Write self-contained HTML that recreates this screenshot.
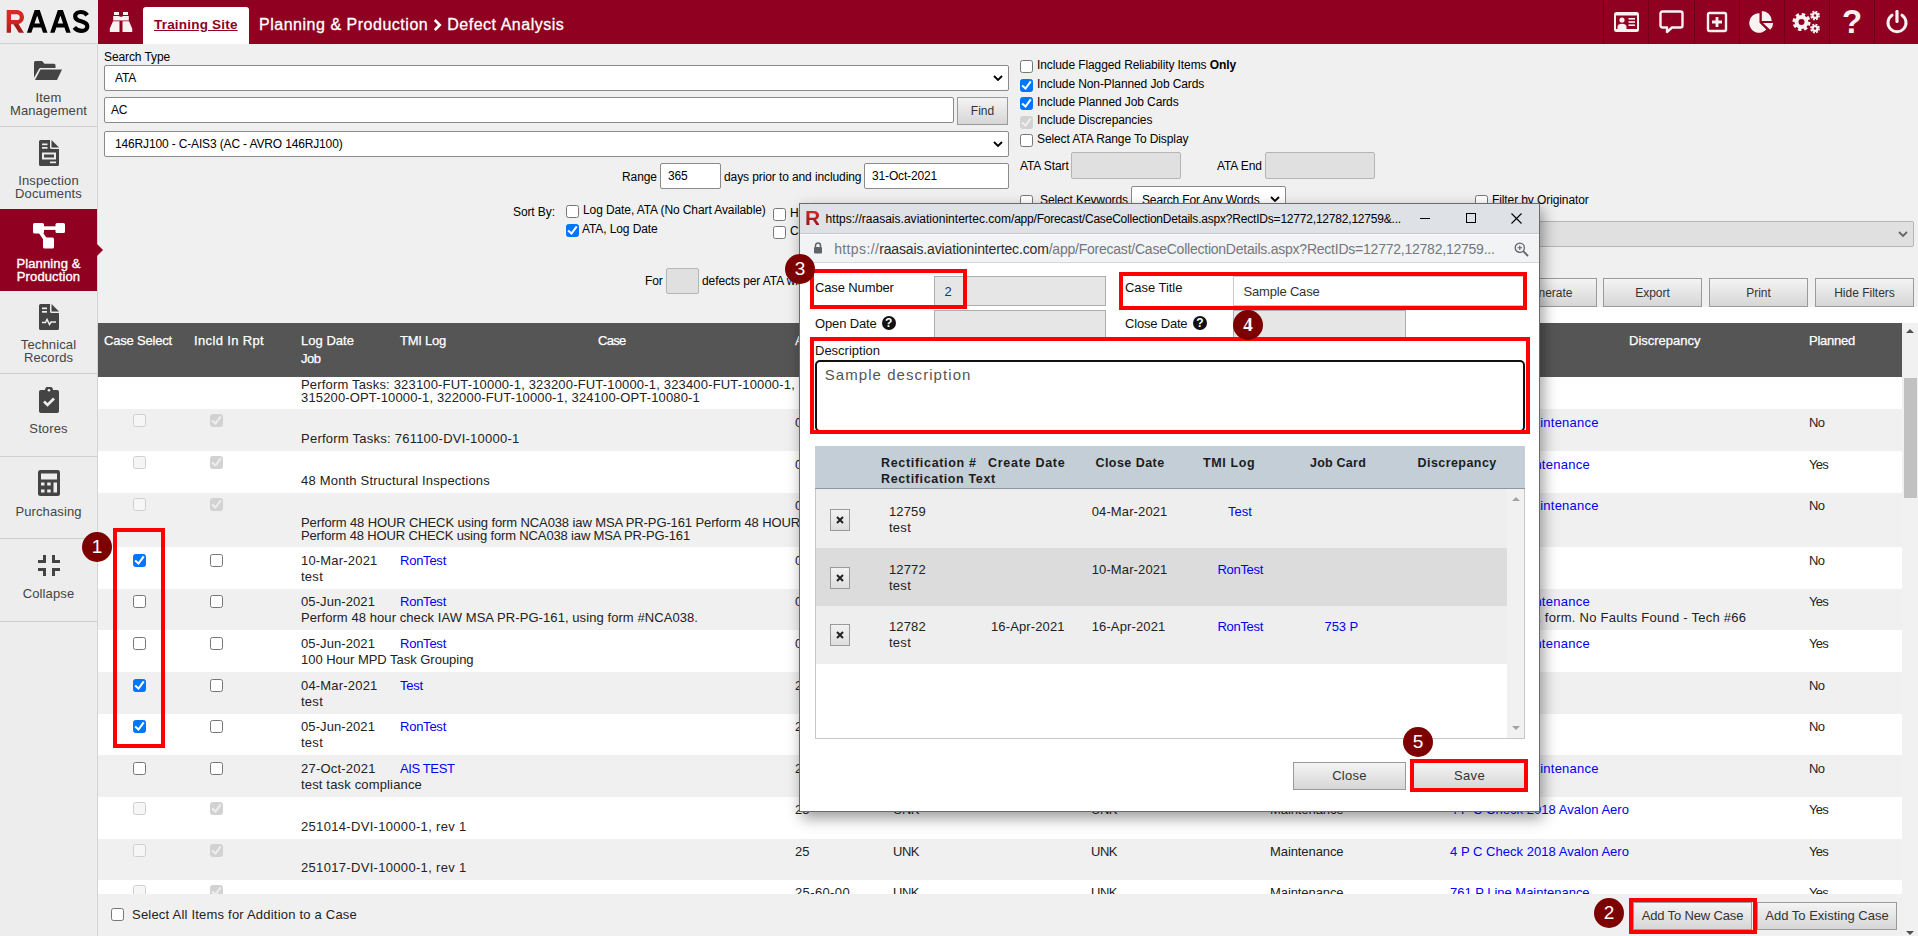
<!DOCTYPE html>
<html><head><meta charset="utf-8">
<style>
*{box-sizing:border-box;margin:0;padding:0}
html,body{width:1918px;height:936px;overflow:hidden;background:#f0f0f0;font-family:"Liberation Sans",sans-serif;font-size:12px;color:#000}
.abs{position:absolute}
#top{position:absolute;left:0;top:0;width:1918px;height:44px;background:#8f0021}
#logo{position:absolute;left:0;top:0;width:98px;height:44px;background:#ededed}
#side{position:absolute;left:0;top:44px;width:98px;height:892px;background:#ededed;border-right:1px solid #d4d4d4}
.si{position:absolute;left:0;width:97px;height:83px;border-top:1px solid #d0d0d0;text-align:center;color:#444;font-size:13px;line-height:13px;letter-spacing:.12px}
.si.act{background:#8f0021;color:#fff;border-top-color:#8f0021}
.si svg{position:absolute;left:0;right:0;margin:auto}
.si .t{position:absolute;left:0;width:97px}
.a12{letter-spacing:-.1px;font-size:12px;line-height:14px;white-space:nowrap;position:absolute}
.v{font-size:13px;letter-spacing:.3px;white-space:nowrap;position:absolute;line-height:15px;color:#222}
.inp{letter-spacing:-.15px;position:absolute;background:#fff;border:1px solid #8a8a8a;border-radius:2px;font-size:12px;line-height:14px;white-space:nowrap}
.inp.dis{background:#e0e0e0;border-color:#b5b5b5}
.cb{position:absolute;width:13px;height:13px;border:1px solid #767676;border-radius:2.5px;background:#fff}
.cb.on{background:#0075ff;border-color:#0075ff}
.cb.on:after,.cb.don:after{content:"";position:absolute;left:-1px;top:-1px;width:13px;height:13px;background:#fff;clip-path:polygon(1.4px 7.3px,2.8px 5.8px,5.4px 8.1px,9.9px 1.8px,11.6px 3px,5.7px 11px)}
.cb.don:after{background:#eee}
.cb.d{border-color:#cfcfcf;background:#f6f6f6}
.cb.don{border-color:#d2d2d2;background:#d2d2d2}
.btn{position:absolute;border:1px solid #9a9a9a;background:linear-gradient(#f4f4f4,#d6d6d6);font-size:12px;color:#333;text-align:center;white-space:nowrap}
.row{position:absolute;left:98px;width:1804px}
.row.g{background:#f0f0f0}.row.w{background:#fff}
a,.lk{color:#0000f5}
.badge{position:absolute;width:30px;height:30px;border-radius:15px;background:#7d0000;color:#fff;font-size:19px;line-height:30px;text-align:center}
.red{position:absolute;border:4px solid #f00}
.th{color:#fff;-webkit-text-stroke:.25px #fff}
.vb{font-size:13px;letter-spacing:.3px}
.dk{color:#111}
.gh{font-weight:bold;font-size:12.5px;color:#1c1c1c}
</style></head><body>
<div id="top">
 <!-- binoculars -->
 <svg class="abs" style="left:109px;top:11px" width="24" height="22" viewBox="0 0 24 22"><g fill="#f8f2f3"><path d="M5 1h5v3H5zM14 1h5v3h-5zM4.2 5h6.3v4.5H4.2zM13.5 5h6.3v4.5h-6.3zM10.5 5.8h3v3.7h-3z"/><path d="M4 10.3h6.5V21H.8v-3.4zM13.5 10.3H20l3.2 7.3V21h-9.7z"/></g></svg>
 <div class="abs" style="left:143px;top:7px;width:106px;height:37px;background:#fff;border-radius:3px 3px 0 0"></div>
 <div class="abs" style="left:154px;top:17px;font-size:13.5px;font-weight:bold;color:#8f0021;text-decoration:underline;white-space:nowrap;letter-spacing:.2px">Training Site</div>
 <div class="abs" style="left:259px;top:15.500px;font-size:16px;color:#fff;white-space:nowrap;letter-spacing:.52px;-webkit-text-stroke:.3px #fff">Planning &amp; Production <svg width="9" height="12" viewBox="0 0 9 12" style="margin:0 0 -1px 0"><path d="M1.800 1l5 5-5 5" fill="none" stroke="#fff" stroke-width="2.600"/></svg> Defect Analysis</div>
 <!-- separators -->
 <div class="abs" style="left:1603px;top:0;width:1px;height:44px;background:#6f0019"></div>
 <div class="abs" style="left:1648px;top:0;width:1px;height:44px;background:#6f0019"></div>
 <div class="abs" style="left:1694px;top:0;width:1px;height:44px;background:#6f0019"></div>
 <div class="abs" style="left:1739px;top:0;width:1px;height:44px;background:#6f0019"></div>
 <div class="abs" style="left:1784px;top:0;width:1px;height:44px;background:#6f0019"></div>
 <div class="abs" style="left:1829px;top:0;width:1px;height:44px;background:#6f0019"></div>
 <div class="abs" style="left:1874px;top:0;width:1px;height:44px;background:#6f0019"></div>
 <!-- id card -->
 <svg class="abs" style="left:1613px;top:11px" width="27" height="22" viewBox="0 0 27 22"><rect x="1" y="1" width="25" height="20" rx="2.5" fill="#f8f2f3"/><rect x="3" y="4.5" width="21" height="13.5" fill="#8f0021"/><circle cx="9" cy="9" r="2.6" fill="#f8f2f3"/><path d="M4.5 18v-2.2c0-2 1.8-3 4.5-3s4.500 1 4.500 3V18z" fill="#f8f2f3"/><rect x="15.500" y="7" width="6.500" height="1.600" fill="#f8f2f3"/><rect x="15.500" y="10.200" width="6.500" height="1.600" fill="#f8f2f3"/><rect x="15.500" y="13.400" width="6.500" height="1.600" fill="#f8f2f3"/></svg>
 <!-- comment -->
 <svg class="abs" style="left:1659px;top:10px" width="25" height="24" viewBox="0 0 25 24"><path d="M3.500 1.500h18a2 2 0 0 1 2 2v12a2 2 0 0 1-2 2h-8.500l-5 4.500v-4.500h-4.500a2 2 0 0 1-2-2v-12a2 2 0 0 1 2-2z" fill="none" stroke="#f8f2f3" stroke-width="2.400" stroke-linejoin="round"/></svg>
 <!-- plus square -->
 <svg class="abs" style="left:1706px;top:11px" width="22" height="22" viewBox="0 0 22 22"><rect x="2" y="2" width="18" height="18" rx="1.500" fill="none" stroke="#f8f2f3" stroke-width="2.400"/><path d="M11 6v10M6 11h10" stroke="#f8f2f3" stroke-width="2.800"/></svg>
 <!-- pie -->
 <svg class="abs" style="left:1749px;top:10px" width="26" height="24" viewBox="0 0 26 24"><path d="M10.500 3.200v9.600l6.800 6.800A9.800 9.800 0 1 1 10.500 3.200z" fill="#f8f2f3"/><path d="M12.800 1v10h10A10 10 0 0 0 12.800 1z" fill="#f8f2f3"/><path d="M14 13h10.200a10 10 0 0 1-3 6.700z" fill="#f8f2f3"/></svg>
 <!-- cogs -->
 <svg class="abs" style="left:1792px;top:10px" width="30" height="24" viewBox="0 0 30 24"><g fill="none" stroke="#f8f2f3"><circle cx="9.500" cy="12" r="5" stroke-width="4"/><circle cx="9.500" cy="12" r="7.600" stroke-width="3" stroke-dasharray="3.400 2.570"/><circle cx="23" cy="5.500" r="2.400" stroke-width="2.200"/><circle cx="23" cy="5.500" r="4" stroke-width="1.800" stroke-dasharray="1.900 1.240"/><circle cx="23" cy="18.500" r="2.400" stroke-width="2.200"/><circle cx="23" cy="18.500" r="4" stroke-width="1.800" stroke-dasharray="1.900 1.240"/></g></svg>
 <!-- question -->
 <div class="abs" style="left:1842px;top:4px;width:20px;font-size:33px;font-weight:bold;color:#f8f2f3;line-height:36px;text-align:center">?</div>
 <!-- power -->
 <svg class="abs" style="left:1885px;top:10px" width="24" height="24" viewBox="0 0 24 24"><path d="M7 5.200A9 9 0 1 0 17 5.200" fill="none" stroke="#f8f2f3" stroke-width="3" stroke-linecap="round"/><path d="M12 1.500v10" stroke="#f8f2f3" stroke-width="3.200" stroke-linecap="round"/></svg>
</div>
<div id="logo"><svg class="abs" style="left:0;top:0" width="97" height="44" viewBox="0 0 97 44">
<defs><linearGradient id="rg" x1="0" y1="10" x2="0" y2="33" gradientUnits="userSpaceOnUse"><stop offset="0" stop-color="#dd2a25"/><stop offset=".6" stop-color="#cc2420"/><stop offset="1" stop-color="#aa1d19"/></linearGradient><clipPath id="lc"><rect x="0" y="10" width="97" height="22.700"/></clipPath></defs>
<g fill="none" stroke-width="4.300" clip-path="url(#lc)">
<path d="M14 21L22.700 34.700" stroke="#a31b18"/>
<path d="M8.850 35V12.100h8a5.050 5.050 0 0 1 0 10.100H8.850" stroke="url(#rg)"/>
<path d="M28.500 34.700L37.200 9l8.700 25.700M32 25.500h10.400" stroke="#000" stroke-width="4.200"/>
<path d="M51.700 34.700L60.400 9l8.700 25.700M55.200 25.500h10.400" stroke="#000" stroke-width="4.200"/>
</g>
<path d="M87.200 15.200C85.600 13 83.400 12 80.800 12c-3.300 0-5.600 1.800-5.600 4.400 0 3.200 2.900 4 6 4.800 3.300.9 6.100 1.900 6.100 5.200 0 2.800-2.300 4.500-5.700 4.500-3 0-5.500-1.200-7.300-3.500" stroke="#000" fill="none" stroke-width="4.200"/>
</svg></div>
<div id="side">
 <div class="si" style="top:-1px;height:83px;border-top:1px solid #d0d0d0">
  <svg style="top:16px;left:32.500px;right:auto;margin:0" width="30" height="21" viewBox="0 0 30 20" preserveAspectRatio="none"><path d="M1 2.500A1.500 1.500 0 0 1 2.500 1h6.500l2.500 2.500h9.500a1.500 1.500 0 0 1 1.500 1.500v2.500H8a2.500 2.500 0 0 0-2.300 1.500L1 17z" fill="#444"/><path d="M7.500 9h21.500l-5 10H2z" fill="#444"/></svg>
  <div class="t" style="top:47px">Item</div><div class="t" style="top:60px">Management</div>
 </div>
 <div class="si" style="top:82px;height:83px">
  <svg style="top:13px" width="20" height="26" viewBox="0 0 20 26"><path d="M0 1.500A1.500 1.500 0 0 1 1.500 0H11v7.500a1.500 1.500 0 0 0 1.500 1.500H20v15.500a1.500 1.500 0 0 1-1.500 1.500h-17A1.500 1.500 0 0 1 0 24.500z" fill="#444"/><path d="M12.500 0l7.500 7.500h-7.500z" fill="#444"/><g fill="#ededed"><rect x="3" y="3.500" width="5.500" height="1.700"/><rect x="3" y="7" width="5.500" height="1.700"/><rect x="3" y="12.500" width="14" height="7"/><rect x="11" y="21.500" width="6" height="1.700"/></g><rect x="5" y="14.500" width="10" height="3" fill="#444"/></svg>
  <div class="t" style="top:47px">Inspection</div><div class="t" style="top:60px">Documents</div>
 </div>
 <div class="si act" style="top:165px;height:82px">
  <svg style="top:13px" width="32" height="26" viewBox="0 0 32 26"><g fill="#fff"><rect x="0" y="0" width="11" height="10.500" rx="1.500"/><rect x="22.500" y="0" width="9.500" height="10" rx="1.500"/><rect x="10" y="14.500" width="11" height="11" rx="1.500"/><rect x="10" y="3.300" width="13" height="3.600"/><path d="M5.500 9.500l3.200-1.800 6 9-3.200 1.800z"/></g></svg>
  <div class="t" style="top:47px;-webkit-text-stroke:.35px #fff">Planning &amp;</div><div class="t" style="top:60px;-webkit-text-stroke:.35px #fff">Production</div>
  <div class="abs" style="left:97px;top:34px;width:0;height:0;border-left:6px solid #8f0021;border-top:6px solid transparent;border-bottom:6px solid transparent"></div>
 </div>
 <div class="si" style="top:247px;border-top:none;height:82px">
  <svg style="top:13px" width="20" height="26" viewBox="0 0 20 26"><path d="M0 1.500A1.500 1.500 0 0 1 1.500 0H11v7.500a1.500 1.500 0 0 0 1.500 1.500H20v15.500a1.500 1.500 0 0 1-1.500 1.500h-17A1.500 1.500 0 0 1 0 24.500z" fill="#444"/><path d="M12.500 0l7.500 7.500h-7.500z" fill="#444"/><g fill="#ededed"><rect x="3" y="3.500" width="5" height="1.700"/><rect x="3" y="7" width="5" height="1.700"/></g><path d="M3 18.500h3.500l1.500-3 2.500 5 1.500-2.500h5" fill="none" stroke="#ededed" stroke-width="1.500"/></svg>
  <div class="t" style="top:47px">Technical</div><div class="t" style="top:60px">Records</div>
 </div>
 <div class="si" style="top:329px">
  <svg style="top:13px" width="20" height="26" viewBox="0 0 20 26"><path d="M1.800 3H6a4 3.500 0 0 1 8 0h4.200A1.800 1.800 0 0 1 20 4.800v19.400a1.800 1.800 0 0 1-1.800 1.800H1.800A1.800 1.800 0 0 1 0 24.200V4.800A1.800 1.800 0 0 1 1.800 3z" fill="#444"/><circle cx="10" cy="3.200" r="1.300" fill="#ededed"/><path d="M5 14.500l3.500 3.500 6.500-6.500" fill="none" stroke="#ededed" stroke-width="2.600"/></svg>
  <div class="t" style="top:48px">Stores</div>
 </div>
 <div class="si" style="top:412px;height:82px">
  <svg style="top:13px" width="22" height="26" viewBox="0 0 22 26"><rect x="0" y="0" width="22" height="26" rx="2.500" fill="#444"/><g fill="#ededed"><rect x="3" y="3.500" width="16" height="6"/><rect x="3" y="12.500" width="3.500" height="3"/><rect x="9.200" y="12.500" width="3.500" height="3"/><rect x="15.500" y="12.500" width="3.500" height="10"/><rect x="3" y="19.500" width="3.500" height="3"/><rect x="9.200" y="19.500" width="3.500" height="3"/></g></svg>
  <div class="t" style="top:48px">Purchasing</div>
 </div>
 <div class="si" style="top:494px">
  <svg style="top:16px" width="22" height="21" viewBox="0 0 22 21"><g fill="none" stroke="#444" stroke-width="3"><path d="M0 6.500h6.500V0M22 6.500h-6.500V0M0 14.500h6.500V21M22 14.500h-6.500V21"/></g></svg>
  <div class="t" style="top:48px">Collapse</div>
 </div>
 <div class="si" style="top:577px;height:1px"></div>
</div>
<div id="main">
 <div class="a12" style="left:104px;top:50px">Search Type</div>
 <div class="inp" style="left:104px;top:65px;width:905px;height:26px;padding:5px 0 0 10px">ATA<svg class="abs" style="right:5px;top:9px" width="10" height="7" viewBox="0 0 10 7"><path d="M1 1l4 4 4-4" fill="none" stroke="#000" stroke-width="1.800"/></svg></div>
 <div class="inp" style="left:104px;top:97px;width:850px;height:26px;padding:5px 0 0 6px">AC</div>
 <div class="btn" style="left:957px;top:97px;width:51px;height:28px;line-height:26px">Find</div>
 <div class="inp" style="left:104px;top:131px;width:905px;height:26px;padding:5px 0 0 10px">146RJ100 - C-AIS3 (AC - AVRO 146RJ100)<svg class="abs" style="right:5px;top:9px" width="10" height="7" viewBox="0 0 10 7"><path d="M1 1l4 4 4-4" fill="none" stroke="#000" stroke-width="1.800"/></svg></div>
 <div class="a12" style="left:622px;top:170px">Range</div>
 <div class="inp" style="left:660px;top:163px;width:61px;height:26px;padding:5px 0 0 7px">365</div>
 <div class="a12" style="left:724px;top:170px">days prior to and including</div>
 <div class="inp" style="left:864px;top:163px;width:145px;height:26px;padding:5px 0 0 7px">31-Oct-2021</div>
 <div class="a12" style="left:513px;top:205px">Sort By:</div>
 <div class="cb" style="left:566px;top:205px"></div>
 <div class="a12" style="left:583px;top:203px">Log Date, ATA (No Chart Available)</div>
 <div class="cb on" style="left:566px;top:224px"></div>
 <div class="a12" style="left:582px;top:222px">ATA, Log Date</div>
 <div class="cb" style="left:773px;top:208px"></div>
 <div class="a12" style="left:790px;top:206px">Hide</div>
 <div class="cb" style="left:773px;top:226px"></div>
 <div class="a12" style="left:790px;top:224px">Chart</div>
 <div class="a12" style="left:645px;top:274px">For</div>
 <div class="inp dis" style="left:666px;top:268px;width:33px;height:26px"></div>
 <div class="a12" style="left:702px;top:274px">defects per ATA within range</div>

 <div class="cb" style="left:1020px;top:60px"></div>
 <div class="a12" style="left:1037px;top:58px">Include Flagged Reliability Items <b>Only</b></div>
 <div class="cb on" style="left:1020px;top:79px"></div>
 <div class="a12" style="left:1037px;top:77px">Include Non-Planned Job Cards</div>
 <div class="cb on" style="left:1020px;top:97px"></div>
 <div class="a12" style="left:1037px;top:95px">Include Planned Job Cards</div>
 <div class="cb don" style="left:1020px;top:116px"></div>
 <div class="a12" style="left:1037px;top:113px">Include Discrepancies</div>
 <div class="cb" style="left:1020px;top:134px"></div>
 <div class="a12" style="left:1037px;top:132px">Select ATA Range To Display</div>
 <div class="a12" style="left:1020px;top:159px">ATA Start</div>
 <div class="inp dis" style="left:1071px;top:152px;width:110px;height:27px"></div>
 <div class="a12" style="left:1217px;top:159px">ATA End</div>
 <div class="inp dis" style="left:1265px;top:152px;width:110px;height:27px"></div>
 <div class="cb" style="left:1020px;top:195px"></div>
 <div class="a12" style="left:1040px;top:193px">Select Keywords</div>
 <div class="inp" style="left:1131px;top:186px;width:155px;height:26px;padding:6px 0 0 10px">Search For Any Words<svg class="abs" style="right:5px;top:9px" width="10" height="7" viewBox="0 0 10 7"><path d="M1 1l4 4 4-4" fill="none" stroke="#000" stroke-width="1.800"/></svg></div>
 <div class="cb" style="left:1475px;top:195px"></div>
 <div class="a12" style="left:1492px;top:193px">Filter by Originator</div>
 <div class="inp dis" style="left:1300px;top:221px;width:1614px;height:26px;width:614px"><svg class="abs" style="right:5px;top:9px" width="10" height="7" viewBox="0 0 10 7"><path d="M1 1l4 4 4-4" fill="none" stroke="#666" stroke-width="1.800"/></svg></div>
 <div class="btn" style="left:1498px;top:278px;width:99px;height:29px;line-height:29px">Generate</div>
 <div class="btn" style="left:1603px;top:278px;width:99px;height:29px;line-height:29px">Export</div>
 <div class="btn" style="left:1709px;top:278px;width:99px;height:29px;line-height:29px">Print</div>
 <div class="btn" style="left:1815px;top:278px;width:99px;height:29px;line-height:29px">Hide Filters</div>
 <div class="abs" style="left:1300px;top:307px;width:618px;height:16px;background:#fff"></div>
</div>
<div id="tbl">
<div class="abs" style="left:98px;top:323px;width:1804px;height:54px;background:#555"></div>
<div class="v th" style="left:104px;top:333px;letter-spacing:-0.19px;">Case Select</div>
<div class="v th" style="left:194px;top:333px;letter-spacing:0.354px;">Incld In Rpt</div>
<div class="v th" style="left:301px;top:333px;letter-spacing:0.03px;">Log Date</div>
<div class="v th" style="left:301px;top:351px;letter-spacing:-0.487px;">Job</div>
<div class="v th" style="left:400px;top:333px;letter-spacing:-0.241px;">TMI Log</div>
<div class="v th" style="left:598px;top:333px;letter-spacing:-0.712px;">Case</div>
<div class="v th" style="left:795px;top:333px;letter-spacing:-0.118px;">ATA</div>
<div class="v th" style="left:1629px;top:333px;letter-spacing:-0.003px;">Discrepancy</div>
<div class="v th" style="left:1809px;top:333px;letter-spacing:-0.245px;">Planned</div>
<div class="row w" style="top:377px;height:32px"></div>
<div class="v" style="left:301px;top:377px;letter-spacing:0.175px;">Perform Tasks: 323100-FUT-10000-1, 323200-FUT-10000-1, 323400-FUT-10000-1,</div>
<div class="v" style="left:301px;top:390px;letter-spacing:0.15px;">315200-OPT-10000-1, 322000-FUT-10000-1, 324100-OPT-10080-1</div>
<div class="row g" style="top:409px;height:42px"></div>
<div class="cb d" style="left:133px;top:414px"></div>
<div class="cb don" style="left:210px;top:414px"></div>
<div class="v" style="left:301px;top:431px;letter-spacing:0.242px;">Perform Tasks: 761100-DVI-10000-1</div>
<div class="v" style="left:795px;top:415px;letter-spacing:0.27px;">0</div>
<div class="v lk" style="left:1453.3px;top:415px;letter-spacing:0.25px;">753 P Line Maintenance</div>
<div class="v" style="left:1809px;top:415px;letter-spacing:-0.56px;">No</div>
<div class="row w" style="top:451px;height:42px"></div>
<div class="cb d" style="left:133px;top:456px"></div>
<div class="cb don" style="left:210px;top:456px"></div>
<div class="v" style="left:301px;top:473px;letter-spacing:0.199px;">48 Month Structural Inspections</div>
<div class="v" style="left:795px;top:457px;letter-spacing:0.27px;">0</div>
<div class="v lk" style="left:1475.3px;top:457px;letter-spacing:0.25px;">4 P C Maintenance</div>
<div class="v" style="left:1809px;top:457px;letter-spacing:-0.736px;">Yes</div>
<div class="row g" style="top:493px;height:54px"></div>
<div class="cb d" style="left:133px;top:498px"></div>
<div class="cb don" style="left:210px;top:498px"></div>
<div class="v" style="left:301px;top:515px;letter-spacing:-0.112px;">Perform 48 HOUR CHECK using form NCA038 iaw MSA PR-PG-161 Perform 48 HOUR</div>
<div class="v" style="left:301px;top:528px;letter-spacing:-0.147px;">Perform 48 HOUR CHECK using form NCA038 iaw MSA PR-PG-161</div>
<div class="v" style="left:795px;top:498px;letter-spacing:0.27px;">0</div>
<div class="v lk" style="left:1453.3px;top:498px;letter-spacing:0.25px;">753 P Line Maintenance</div>
<div class="v" style="left:1809px;top:498px;letter-spacing:-0.56px;">No</div>
<div class="row w" style="top:547px;height:42px"></div>
<div class="cb on" style="left:133px;top:554px"></div>
<div class="cb " style="left:210px;top:554px"></div>
<div class="v" style="left:301px;top:553px;letter-spacing:0.188px;">10-Mar-2021</div>
<div class="v lk" style="left:400px;top:553px;letter-spacing:-0.242px;">RonTest</div>
<div class="v" style="left:301px;top:569px;letter-spacing:0.262px;">test</div>
<div class="v" style="left:795px;top:553px;letter-spacing:0.27px;">0</div>
<div class="v" style="left:1809px;top:553px;letter-spacing:-0.56px;">No</div>
<div class="row g" style="top:589px;height:41px"></div>
<div class="cb " style="left:133px;top:595px"></div>
<div class="cb " style="left:210px;top:595px"></div>
<div class="v" style="left:301px;top:594px;letter-spacing:0.091px;">05-Jun-2021</div>
<div class="v lk" style="left:400px;top:594px;letter-spacing:-0.242px;">RonTest</div>
<div class="v" style="left:301px;top:610px;letter-spacing:0.074px;">Perform 48 hour check IAW MSA PR-PG-161, using form #NCA038.</div>
<div class="v" style="left:795px;top:594px;letter-spacing:0.27px;">0</div>
<div class="v lk" style="left:1475.3px;top:594px;letter-spacing:0.25px;">4 P C Maintenance</div>
<div class="v" style="left:1479.7px;top:610px;letter-spacing:0.25px;">Check OK form. No Faults Found - Tech #66</div>
<div class="v" style="left:1809px;top:594px;letter-spacing:-0.736px;">Yes</div>
<div class="row w" style="top:630px;height:42px"></div>
<div class="cb " style="left:133px;top:637px"></div>
<div class="cb " style="left:210px;top:637px"></div>
<div class="v" style="left:301px;top:636px;letter-spacing:0.091px;">05-Jun-2021</div>
<div class="v lk" style="left:400px;top:636px;letter-spacing:-0.242px;">RonTest</div>
<div class="v" style="left:301px;top:652px;letter-spacing:-0.023px;">100 Hour MPD Task Grouping</div>
<div class="v" style="left:795px;top:636px;letter-spacing:0.27px;">0</div>
<div class="v lk" style="left:1475.3px;top:636px;letter-spacing:0.25px;">4 P C Maintenance</div>
<div class="v" style="left:1809px;top:636px;letter-spacing:-0.736px;">Yes</div>
<div class="row g" style="top:672px;height:42px"></div>
<div class="cb on" style="left:133px;top:679px"></div>
<div class="cb " style="left:210px;top:679px"></div>
<div class="v" style="left:301px;top:678px;letter-spacing:0.188px;">04-Mar-2021</div>
<div class="v lk" style="left:400px;top:678px;letter-spacing:-0.21px;">Test</div>
<div class="v" style="left:301px;top:694px;letter-spacing:0.262px;">test</div>
<div class="v" style="left:795px;top:678px;letter-spacing:0.27px;">2</div>
<div class="v" style="left:1809px;top:678px;letter-spacing:-0.56px;">No</div>
<div class="row w" style="top:714px;height:41px"></div>
<div class="cb on" style="left:133px;top:720px"></div>
<div class="cb " style="left:210px;top:720px"></div>
<div class="v" style="left:301px;top:719px;letter-spacing:0.091px;">05-Jun-2021</div>
<div class="v lk" style="left:400px;top:719px;letter-spacing:-0.242px;">RonTest</div>
<div class="v" style="left:301px;top:735px;letter-spacing:0.262px;">test</div>
<div class="v" style="left:795px;top:719px;letter-spacing:0.27px;">2</div>
<div class="v" style="left:1809px;top:719px;letter-spacing:-0.56px;">No</div>
<div class="row g" style="top:755px;height:42px"></div>
<div class="cb " style="left:133px;top:762px"></div>
<div class="cb " style="left:210px;top:762px"></div>
<div class="v" style="left:301px;top:761px;letter-spacing:0.212px;">27-Oct-2021</div>
<div class="v lk" style="left:400px;top:761px;letter-spacing:-0.382px;">AIS TEST</div>
<div class="v" style="left:301px;top:777px;letter-spacing:0.161px;">test task compliance</div>
<div class="v" style="left:795px;top:761px;letter-spacing:0.27px;">2</div>
<div class="v lk" style="left:1453.3px;top:761px;letter-spacing:0.25px;">753 P Line Maintenance</div>
<div class="v" style="left:1809px;top:761px;letter-spacing:-0.56px;">No</div>
<div class="row w" style="top:797px;height:42px"></div>
<div class="cb d" style="left:133px;top:802px"></div>
<div class="cb don" style="left:210px;top:802px"></div>
<div class="v" style="left:301px;top:819px;letter-spacing:0.318px;">251014-DVI-10000-1, rev 1</div>
<div class="v" style="left:795px;top:802px;letter-spacing:0.02px;">25</div>
<div class="v" style="left:893px;top:802px;letter-spacing:-0.483px;">UNK</div>
<div class="v" style="left:1091px;top:802px;letter-spacing:-0.483px;">UNK</div>
<div class="v" style="left:1270px;top:802px;letter-spacing:-0.086px;">Maintenance</div>
<div class="v lk" style="left:1450px;top:802px;letter-spacing:0.034px;">4 P C Check 2018 Avalon Aero</div>
<div class="v" style="left:1809px;top:802px;letter-spacing:-0.736px;">Yes</div>
<div class="row g" style="top:839px;height:41px"></div>
<div class="cb d" style="left:133px;top:844px"></div>
<div class="cb don" style="left:210px;top:844px"></div>
<div class="v" style="left:301px;top:860px;letter-spacing:0.318px;">251017-DVI-10000-1, rev 1</div>
<div class="v" style="left:795px;top:844px;letter-spacing:0.02px;">25</div>
<div class="v" style="left:893px;top:844px;letter-spacing:-0.483px;">UNK</div>
<div class="v" style="left:1091px;top:844px;letter-spacing:-0.483px;">UNK</div>
<div class="v" style="left:1270px;top:844px;letter-spacing:-0.086px;">Maintenance</div>
<div class="v lk" style="left:1450px;top:844px;letter-spacing:0.034px;">4 P C Check 2018 Avalon Aero</div>
<div class="v" style="left:1809px;top:844px;letter-spacing:-0.736px;">Yes</div>
<div class="row w" style="top:880px;height:14px"></div>
<div class="cb d" style="left:133px;top:885px"></div>
<div class="cb don" style="left:210px;top:885px"></div>
<div class="v" style="left:795px;top:885px;letter-spacing:0.37px;">25-60-00</div>
<div class="v" style="left:893px;top:885px;letter-spacing:-0.483px;">UNK</div>
<div class="v" style="left:1091px;top:885px;letter-spacing:-0.483px;">UNK</div>
<div class="v" style="left:1270px;top:885px;letter-spacing:-0.086px;">Maintenance</div>
<div class="v lk" style="left:1450px;top:885px;letter-spacing:-0.018px;">761 P Line Maintenance</div>
<div class="v" style="left:1809px;top:885px;letter-spacing:-0.736px;">Yes</div>
<div class="abs" style="left:1902px;top:323px;width:16px;height:613px;background:#f1f1f1"></div>
<div class="abs" style="left:1904px;top:378px;width:13px;height:120px;background:#c1c1c1"></div>
<div class="abs" style="left:1906px;top:329px;width:0;height:0;border-bottom:4px solid #505050;border-left:4px solid transparent;border-right:4px solid transparent"></div>
<div class="abs" style="left:1906px;top:931px;width:0;height:0;border-top:4px solid #505050;border-left:4px solid transparent;border-right:4px solid transparent"></div>
</div>
<div id="foot"><div class="abs" style="left:98px;top:894px;width:1804px;height:42px;background:#f0f0f0"></div>
<div class="cb" style="left:111px;top:908px"></div>
<div class="v" style="left:132px;top:907px;letter-spacing:0.211px;">Select All Items for Addition to a Case</div>
<div class="btn vb" style="left:1633px;top:902px;width:119px;height:28px;line-height:26px;letter-spacing:-.15px">Add To New Case</div>
<div class="btn vb" style="left:1757px;top:902px;width:140px;height:28px;line-height:26px;letter-spacing:0">Add To Existing Case</div>
</div>
<div id="dlg">
<div class="abs" style="left:799px;top:203px;width:741px;height:609px;background:#fff;border:1px solid #6b6b6b;box-shadow:3px 6px 14px 0 rgba(0,0,0,.40)"></div>
<div class="abs" style="left:800px;top:204px;width:739px;height:30px;background:#dee1e6;border-bottom:1px solid #c3c6cb"></div>
<div class="abs" style="left:805px;top:207px;font-size:21px;line-height:22px;font-weight:bold;background:linear-gradient(#e3262a,#8a1215);-webkit-background-clip:text;background-clip:text;color:transparent;letter-spacing:-1px">R</div>
<div class="abs" style="left:825.6px;top:212px;font-size:12px;line-height:14px;white-space:nowrap;color:#000"><span style="letter-spacing:0.018px">https://raasais.aviationintertec.com</span><span style="letter-spacing:-0.199px">/app/Forecast/CaseCollectionDetails.aspx?RectIDs=12772,12782,12759&amp;...</span></div>
<div class="abs" style="left:1420px;top:218px;width:10px;height:1px;background:#000"></div>
<div class="abs" style="left:1466px;top:213px;width:10px;height:10px;border:1px solid #000"></div>
<svg class="abs" style="left:1511px;top:213px" width="11" height="11" viewBox="0 0 11 11"><path d="M.5.5l10 10M10.500.5l-10 10" stroke="#000" stroke-width="1.100"/></svg>
<div class="abs" style="left:800px;top:235px;width:739px;height:28px;background:#f1f3f4;border-bottom:1px solid #d5d7da"></div>
<svg class="abs" style="left:813px;top:242px" width="10" height="12" viewBox="0 0 10 12"><path d="M2.500 5V3.500a2.500 2.500 0 0 1 5 0V5" fill="none" stroke="#5f6368" stroke-width="1.500"/><rect x="1" y="5" width="8" height="6.500" rx="1" fill="#5f6368"/></svg>
<div class="abs" style="left:834.2px;top:241px;font-size:14px;line-height:16px;white-space:nowrap;color:#74777b"><span style="letter-spacing:0.372px">https://</span><span style="color:#2b2d30;letter-spacing:-0.144px">raasais.aviationintertec.com</span><span style="letter-spacing:-0.231px">/app/Forecast/CaseCollectionDetails.aspx?RectIDs=12772,12782,12759...</span></div>
<svg class="abs" style="left:1514px;top:242px" width="15" height="15" viewBox="0 0 15 15"><circle cx="5.800" cy="5.800" r="4.600" fill="none" stroke="#5f6368" stroke-width="1.300"/><path d="M9.200 9.200l4.800 4.800" stroke="#5f6368" stroke-width="1.800"/><path d="M3.500 5.800h4.600M5.800 3.500v4.600" stroke="#5f6368" stroke-width="1.100"/></svg>
<div class="v dk" style="left:815px;top:280px;letter-spacing:-0.127px;">Case Number</div>
<div class="inp dis" style="left:934px;top:276px;width:172px;height:30px;border-radius:0;border-color:#adadad;background:#e6e6e6"></div>
<div class="v" style="left:944.5px;top:284px;letter-spacing:0.57px;color:#333">2</div>
<div class="v dk" style="left:1125px;top:280px;letter-spacing:-0.04px;">Case Title</div>
<div class="inp" style="left:1233px;top:276px;width:291px;height:30px;border-radius:0;border-color:#c9c9c9"></div>
<div class="v" style="left:1243.6px;top:284px;letter-spacing:-0.195px;color:#333">Sample Case</div>
<div class="v dk" style="left:815px;top:316px;letter-spacing:-0.131px;">Open Date</div>
<div class="v dk" style="left:1125px;top:316px;letter-spacing:-0.191px;">Close Date</div>
<div class="abs" style="left:881.6px;top:315.5px;width:14px;height:14px;border-radius:7px;background:#111;color:#fff;font-size:12px;font-weight:bold;line-height:14px;text-align:center">?</div>
<div class="abs" style="left:1192.9px;top:315.5px;width:14px;height:14px;border-radius:7px;background:#111;color:#fff;font-size:12px;font-weight:bold;line-height:14px;text-align:center">?</div>
<div class="inp dis" style="left:934px;top:310px;width:172px;height:30px;border-radius:0;border-color:#adadad;background:#e6e6e6"></div>
<div class="inp dis" style="left:1233px;top:310px;width:173px;height:30px;border-radius:0;border-color:#adadad;background:#e6e6e6"></div>
<div class="abs" style="left:812px;top:340px;width:716px;height:92px;background:#fff"></div>
<div class="v dk" style="left:815px;top:343px;letter-spacing:-0.003px;">Description</div>
<div class="abs" style="left:815px;top:360px;width:710px;height:72px;border:2px solid #111;border-radius:5px;background:#fff"></div>
<div class="v" style="left:824.7px;top:366px;letter-spacing:1.069px;font-size:15px;line-height:18px;color:#555">Sample description</div>
<div class="abs" style="left:815px;top:446px;width:710px;height:43px;background:#c4ced7;border-bottom:1px solid #8f979e"></div>
<div class="v gh" style="left:881px;top:456px;letter-spacing:0.685px;">Rectification #</div>
<div class="v gh" style="left:988px;top:456px;letter-spacing:0.721px;">Create Date</div>
<div class="v gh" style="left:1095.4px;top:456px;letter-spacing:0.46px;">Close Date</div>
<div class="v gh" style="left:1203px;top:456px;letter-spacing:0.643px;">TMI Log</div>
<div class="v gh" style="left:1310px;top:456px;letter-spacing:0.229px;">Job Card</div>
<div class="v gh" style="left:1417.5px;top:456px;letter-spacing:0.442px;">Discrepancy</div>
<div class="v gh" style="left:881px;top:472px;letter-spacing:0.642px;">Rectification Text</div>
<div class="abs" style="left:815px;top:489px;width:710px;height:250px;border:1px solid #c8c8c8;border-top:none;background:#fff"></div>
<div class="abs" style="left:1507px;top:489px;width:17px;height:249px;background:#f1f1f1"></div>
<div class="abs" style="left:1511.500px;top:497px;width:0;height:0;border-bottom:4px solid #a3a3a3;border-left:4px solid transparent;border-right:4px solid transparent"></div>
<div class="abs" style="left:1511.500px;top:726px;width:0;height:0;border-top:4px solid #a3a3a3;border-left:4px solid transparent;border-right:4px solid transparent"></div>
<div class="abs" style="left:816px;top:489px;width:691px;height:58.5px;background:#eee"></div>
<div class="abs" style="left:830px;top:509px;width:20px;height:22px;border:1px solid #9a9a9a;background:linear-gradient(#f2f2f2,#dedede)"><svg class="abs" style="left:5px;top:6px" width="8" height="8" viewBox="0 0 8 8"><path d="M1 1l6 6M7 1l-6 6" stroke="#222" stroke-width="2"/></svg></div>
<div class="v" style="left:889px;top:504px;letter-spacing:0.13px;">12759</div>
<div class="v" style="left:889px;top:520px;letter-spacing:0.262px;">test</div>
<div class="v" style="left:1091.7px;top:504px;letter-spacing:0.124px;">04-Mar-2021</div>
<div class="v lk" style="left:1228px;top:504px;letter-spacing:-0.035px;">Test</div>
<div class="abs" style="left:816px;top:547.5px;width:691px;height:58px;background:#dcdcdc"></div>
<div class="abs" style="left:830px;top:567px;width:20px;height:22px;border:1px solid #9a9a9a;background:linear-gradient(#f2f2f2,#dedede)"><svg class="abs" style="left:5px;top:6px" width="8" height="8" viewBox="0 0 8 8"><path d="M1 1l6 6M7 1l-6 6" stroke="#222" stroke-width="2"/></svg></div>
<div class="v" style="left:889px;top:562px;letter-spacing:0.13px;">12772</div>
<div class="v" style="left:889px;top:578px;letter-spacing:0.262px;">test</div>
<div class="v" style="left:1091.7px;top:562px;letter-spacing:0.124px;">10-Mar-2021</div>
<div class="v lk" style="left:1217.5px;top:562px;letter-spacing:-0.313px;">RonTest</div>
<div class="abs" style="left:816px;top:605.5px;width:691px;height:58.5px;background:#eee"></div>
<div class="abs" style="left:830px;top:624px;width:20px;height:22px;border:1px solid #9a9a9a;background:linear-gradient(#f2f2f2,#dedede)"><svg class="abs" style="left:5px;top:6px" width="8" height="8" viewBox="0 0 8 8"><path d="M1 1l6 6M7 1l-6 6" stroke="#222" stroke-width="2"/></svg></div>
<div class="v" style="left:889px;top:619px;letter-spacing:0.13px;">12782</div>
<div class="v" style="left:889px;top:635px;letter-spacing:0.262px;">test</div>
<div class="v" style="left:991px;top:619px;letter-spacing:0.12px;">16-Apr-2021</div>
<div class="v" style="left:1091.7px;top:619px;letter-spacing:0.13px;">16-Apr-2021</div>
<div class="v lk" style="left:1217.5px;top:619px;letter-spacing:-0.313px;">RonTest</div>
<div class="v lk" style="left:1324.6px;top:619px;letter-spacing:-0.115px;">753 P</div>
<div class="btn vb" style="left:1293px;top:762px;width:113px;height:28px;line-height:26px">Close</div>
<div class="btn vb" style="left:1413px;top:762px;width:113px;height:28px;line-height:26px">Save</div>
</div>
<div id="ann">
<div class="red" style="left:113px;top:528px;width:52px;height:220px;border-width:4px"></div>
<div class="red" style="left:1629px;top:898px;width:127.5px;height:35.5px;border-width:4px"></div>
<div class="red" style="left:810px;top:269px;width:157px;height:40px;border-width:4px"></div>
<div class="red" style="left:1119px;top:272px;width:408px;height:38px;border-width:4px"></div>
<div class="red" style="left:810px;top:337px;width:720px;height:96.5px;border-width:4px"></div>
<div class="red" style="left:1410px;top:758.5px;width:118px;height:33.5px;border-width:4px"></div>
<div class="badge" style="left:82px;top:532px;">1</div>
<div class="badge" style="left:1594px;top:897.5px;">2</div>
<div class="badge" style="left:785px;top:254px;">3</div>
<div class="badge" style="left:1233px;top:310px;font-family:'Liberation Serif',serif;font-weight:bold;">4</div>
<div class="badge" style="left:1403px;top:727px;">5</div>
</div>
</body></html>
